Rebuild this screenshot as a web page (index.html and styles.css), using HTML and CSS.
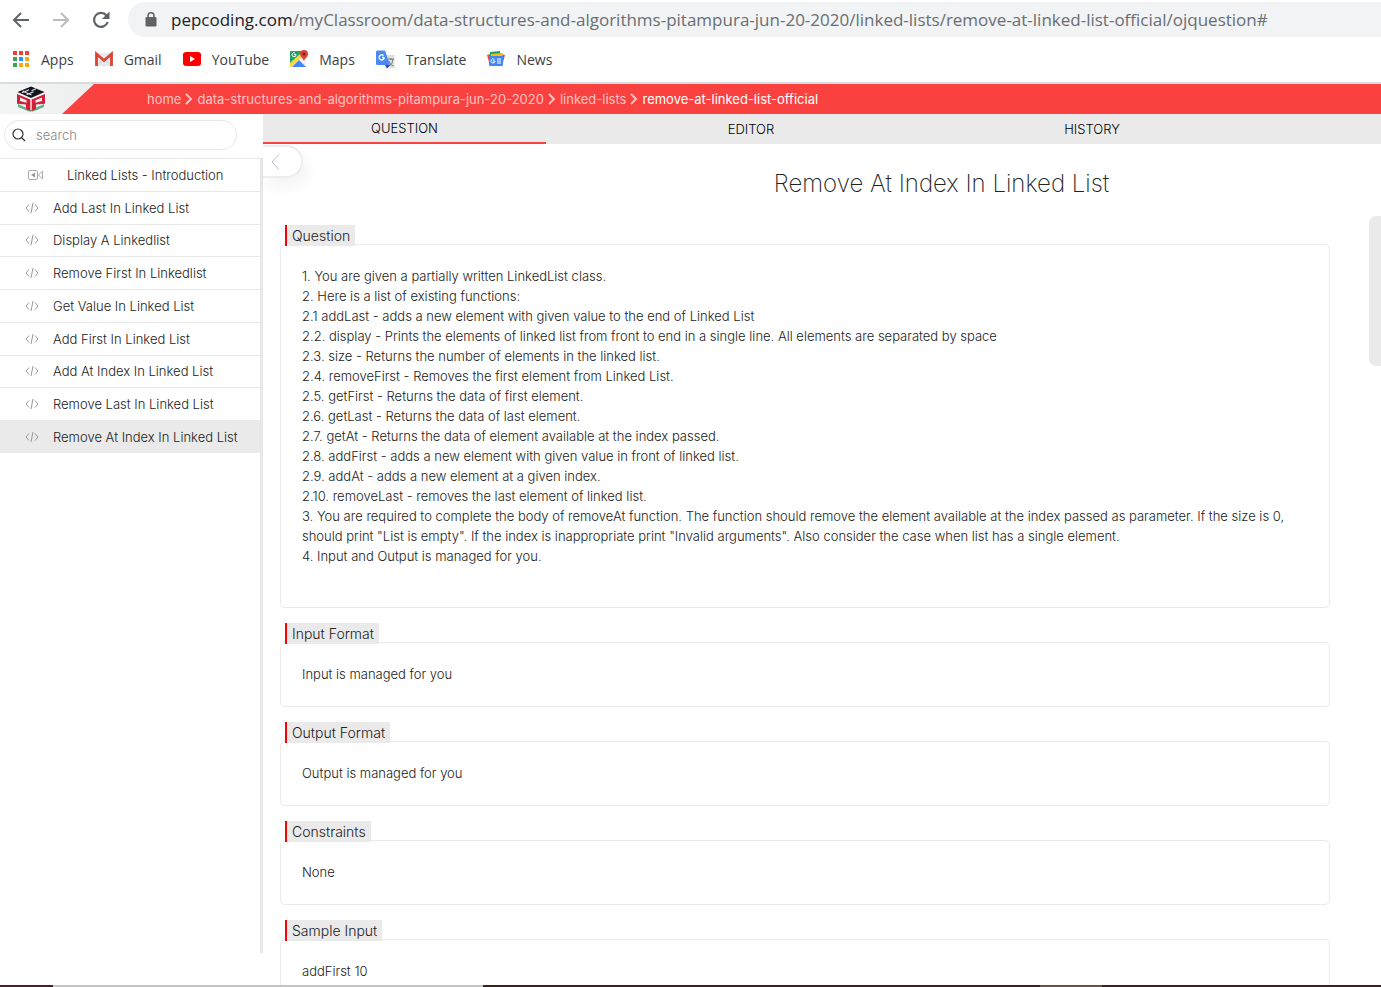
FILE: index.html
```html
<!DOCTYPE html>
<html lang="en">
<head>
<meta charset="utf-8">
<title>Remove At Index In Linked List</title>
<link rel="stylesheet" href="styles.css">
</head>
<body>
<div class="window">
  <div class="toolbar">
    <button class="nav" aria-label="Back"><svg viewBox="0 0 18 18" width="18" height="18" fill="none" stroke="#5f6368" stroke-width="2"><path d="M17 9H2M9 2L2 9l7 7"/></svg></button>
    <button class="nav" aria-label="Forward"><svg viewBox="0 0 18 18" width="18" height="18" fill="none" stroke="#babcbe" stroke-width="2"><path d="M1 9h15M9 2l7 7-7 7"/></svg></button>
    <button class="nav" aria-label="Reload"><svg viewBox="0 0 18 18" width="18" height="18"><path d="M14.500 4.500A7 7 0 1 0 15.700 11" fill="none" stroke="#5f6368" stroke-width="2.200"/><path d="M17.500 0.500v7.500H10z" fill="#5f6368"/></svg></button>
    <div class="address">
      <svg viewBox="0 0 12 15" width="12" height="15"><rect x="0.500" y="5" width="11" height="9.500" rx="1.200" fill="#5f6368"/><path d="M3 6V3.800a3 3 0 0 1 6 0V6" fill="none" stroke="#5f6368" stroke-width="1.500"/></svg>
      <span class="url"><b>pepcoding.com</b>/myClassroom/data-structures-and-algorithms-pitampura-jun-20-2020/linked-lists/remove-at-linked-list-official/ojquestion#</span>
    </div>
  </div>
  <nav class="bookmarks">
    <a href="#"><svg viewBox="0 0 18 18" width="18" height="18"><path fill="#ea4335" d="M1 1h4v4H1zM7 1h4v4H7zM13 1h4v4h-4z"/><path fill="#34a853" d="M1 7h4v4H1z"/><path fill="#2196f3" d="M7 7h4v4H7z"/><path fill="#fba90a" d="M13 7h4v4h-4zM7 13h4v4H7zM13 13h4v4h-4z"/><path fill="#34a853" d="M1 13h4v4H1z"/></svg>Apps</a>
    <a href="#"><svg viewBox="0 0 18 18" width="18" height="18"><path d="M0 3h18v13H0z" fill="#e9e9e9"/><path d="M1 16l8-7 8 7" fill="none" stroke="#cfcfcf"/><path d="M1.500 16V4L9 10.500 16.500 4V16" fill="none" stroke="#db4437" stroke-width="2.800"/></svg>Gmail</a>
    <a href="#"><svg viewBox="0 0 18 18" width="18" height="18"><rect y="2" width="18" height="14" rx="3" fill="#f00"/><path d="M7 6l5 3-5 3z" fill="#fff"/></svg>YouTube</a>
    <a href="#"><svg viewBox="0 0 18 18" width="18" height="18"><rect y="1" width="16" height="16" rx="1" fill="#1fa463"/><path d="M0 15L12 4l4 4v9H0z" fill="#f1f1f1"/><path d="M2 17l7-7 7 7z" fill="#4285f4"/><path d="M0 13L11 3l2 3L1 17H0z" fill="#fdd835"/><path d="M6 4.500H4M6 4.500A2 2 0 1 1 5 3" fill="none" stroke="#fff"/><path d="M14 11c-1-3-4-4-4-7a4 4 0 0 1 8 0c0 3-3 4-4 7z" fill="#dc4437"/><circle cx="14" cy="4" r="1.500" fill="#7b241d"/></svg>Maps</a>
    <a href="#"><svg viewBox="0 0 19 19" width="19" height="19"><path d="M7 5h11.500v13H10z" fill="#e0e0e0"/><path d="M12 9h6M15 8v2M12.500 16c3-1 4-3 4.500-7M13 11c1 3 2 4 4.500 5" fill="none" stroke="#707b80"/><path d="M9 15h5l-3 3.500z" fill="#3949ab"/><path d="M1.500.500H9L14 15H1.500A1.500 1.500 0 0 1 0 13.500V2A1.500 1.500 0 0 1 1.500.500z" fill="#4b8af5"/><path d="M8.300 7.500H6M8.300 7.500A2.600 2.600 0 1 1 7.500 5.500" fill="none" stroke="#fff" stroke-width="1.300"/></svg>Translate</a>
    <a href="#"><svg viewBox="0 0 18 18" width="18" height="18"><path d="M0 5l4-1v8H2z" fill="#e8453c"/><path d="M18 5l-4-1v8h2z" fill="#e8453c"/><path d="M3 2l10-1 1 6H3z" fill="#20a464"/><path d="M4 4l12-1-1 6H4z" fill="#fbbc04"/><path d="M2 6h14v9a1 1 0 0 1-1 1H3a1 1 0 0 1-1-1z" fill="#4285f4"/><path d="M8 11H6M8 11a2 2 0 1 1-.6-1.500M10 9h4M10 11h4M10 13h4" fill="none" stroke="#fff"/></svg>News</a>
  </nav>
  <header class="header">
    <a class="logo" href="#" aria-label="Home"><svg viewBox="0 0 30 26" width="30" height="26"><path d="M2 18l13 6 13-6v3l-11 4.500h-4L2 21z" fill="#63ad88"/><path d="M15 0.500L28.500 6 15 12 1.500 6z" fill="#15151f"/><path d="M6 6.800l7-3M10.500 8.700l7-3M15.500 4.800l4.500-2M6.500 5l9 4" stroke="#dfe3e6" stroke-width="1.100" fill="none"/><path d="M1 8l13.300 5.500V25L10 23v-4.500L1 17.800z" fill="#d3203a"/><path d="M29 8l-13.300 5.500V25l4.300-2v-4.500l9-.7z" fill="#d3203a"/><path d="M4 11.500l6.500 2.700v2.600L4 15z" fill="#f3eff0"/><path d="M26 11.500l-6.500 2.700v2.600L26 15z" fill="#f3eff0"/></svg></a>
    <nav class="crumbs" aria-label="Breadcrumb">
      <a href="#">home</a><svg viewBox="0 0 8 12" width="8" height="12"><path d="M1 1l5 5-5 5"/></svg>
      <a href="#">data-structures-and-algorithms-pitampura-jun-20-2020</a><svg viewBox="0 0 8 12" width="8" height="12"><path d="M1 1l5 5-5 5"/></svg>
      <a href="#">linked-lists</a><svg viewBox="0 0 8 12" width="8" height="12"><path d="M1 1l5 5-5 5"/></svg>
      <a href="#" class="current">remove-at-linked-list-official</a>
    </nav>
  </header>
  <div class="body">
    <aside class="sidebar">
      <label class="search"><svg viewBox="0 0 14 14" width="14" height="14" fill="none" stroke="#333" stroke-width="1.200"><circle cx="6" cy="6" r="5"/><path d="M9.500 9.500L13 13"/></svg><input type="text" placeholder="search" aria-label="search"></label>
      <div class="list">
        <a class="video" href="#"><svg viewBox="0 0 16 12" width="16" height="12" fill="none" stroke="#aaa"><rect x="0.500" y="1.500" width="9" height="9" rx="1.500"/><path d="M10.500 6l4-4v8z"/><path d="M7 3.500v5L3 6z" fill="#999" stroke="none"/></svg>Linked Lists - Introduction</a>
        <a href="#"><svg class="code" viewBox="0 0 14 12" width="14" height="12"><path d="M4 2.500L1 6l3 3.500M10 2.500L13 6l-3 3.500M8 1L6 11"/></svg>Add Last In Linked List</a>
        <a href="#"><svg class="code" viewBox="0 0 14 12" width="14" height="12"><path d="M4 2.500L1 6l3 3.500M10 2.500L13 6l-3 3.500M8 1L6 11"/></svg>Display A Linkedlist</a>
        <a href="#"><svg class="code" viewBox="0 0 14 12" width="14" height="12"><path d="M4 2.500L1 6l3 3.500M10 2.500L13 6l-3 3.500M8 1L6 11"/></svg>Remove First In Linkedlist</a>
        <a href="#"><svg class="code" viewBox="0 0 14 12" width="14" height="12"><path d="M4 2.500L1 6l3 3.500M10 2.500L13 6l-3 3.500M8 1L6 11"/></svg>Get Value In Linked List</a>
        <a href="#"><svg class="code" viewBox="0 0 14 12" width="14" height="12"><path d="M4 2.500L1 6l3 3.500M10 2.500L13 6l-3 3.500M8 1L6 11"/></svg>Add First In Linked List</a>
        <a href="#"><svg class="code" viewBox="0 0 14 12" width="14" height="12"><path d="M4 2.500L1 6l3 3.500M10 2.500L13 6l-3 3.500M8 1L6 11"/></svg>Add At Index In Linked List</a>
        <a href="#"><svg class="code" viewBox="0 0 14 12" width="14" height="12"><path d="M4 2.500L1 6l3 3.500M10 2.500L13 6l-3 3.500M8 1L6 11"/></svg>Remove Last In Linked List</a>
        <a class="active" href="#"><svg class="code" viewBox="0 0 14 12" width="14" height="12"><path d="M4 2.500L1 6l3 3.500M10 2.500L13 6l-3 3.500M8 1L6 11"/></svg>Remove At Index In Linked List</a>
      </div>
    </aside>
    <main class="main">
      <nav class="tabs">
        <button class="selected">QUESTION</button>
        <button>EDITOR</button>
        <button>HISTORY</button>
      </nav>
      <button class="collapse" aria-label="Collapse sidebar"><svg viewBox="0 0 9 16" width="9" height="16" fill="none" stroke="#b9b9cc"><path d="M8 0.500L1 8l7 7.500"/></svg></button>
      <div class="scrollthumb"></div>
      <div class="content">
        <h1>Remove At Index In Linked List</h1>
        <section>
          <h2>Question</h2>
          <div class="card long">1. You are given a partially written LinkedList class.<br>2. Here is a list of existing functions:<br>2.1 addLast - adds a new element with given value to the end of Linked List<br>2.2. display - Prints the elements of linked list from front to end in a single line. All elements are separated by space<br>2.3. size - Returns the number of elements in the linked list.<br>2.4. removeFirst - Removes the first element from Linked List.<br>2.5. getFirst - Returns the data of first element.<br>2.6. getLast - Returns the data of last element.<br>2.7. getAt - Returns the data of element available at the index passed.<br>2.8. addFirst - adds a new element with given value in front of linked list.<br>2.9. addAt - adds a new element at a given index.<br>2.10. removeLast - removes the last element of linked list.<br>3. You are required to complete the body of removeAt function. The function should remove the element available at the index passed as parameter. If the size is 0, should print "List is empty". If the index is inappropriate print "Invalid arguments". Also consider the case when list has a single element.<br>4. Input and Output is managed for you.</div>
        </section>
        <section><h2>Input Format</h2><div class="card">Input is managed for you</div></section>
        <section><h2>Output Format</h2><div class="card">Output is managed for you</div></section>
        <section><h2>Constraints</h2><div class="card">None</div></section>
        <section><h2>Sample Input</h2><div class="card">addFirst 10</div></section>
      </div>
    </main>
  </div>
  <footer class="edge"></footer>
</div>
</body>
</html>
```
FILE: styles.css
```css
* { box-sizing: border-box; }
body { margin: 0; background: #fff; color: #222; font-family: Inter, sans-serif; font-size: 13px; font-weight: 300; }
button { border: 0; background: none; padding: 0; font: inherit; color: inherit; }
a { color: inherit; text-decoration: none; }
svg { flex: none; display: block; }
.window { height: 100vh; display: flex; flex-direction: column; overflow: hidden; }

.toolbar { display: flex; align-items: center; height: 39px; padding-left: 12px; gap: 22px; flex: none; }
.nav { width: 18px; height: 18px; }
.address { flex: 1; min-width: 0; height: 35px; margin-left: -4px; padding-left: 17px; display: flex; align-items: center; gap: 14px; background: #f1f3f4; border-radius: 18px 0 0 18px; }
.url { font-family: "Open Sans", sans-serif; font-size: 17px; font-weight: 400; color: #6a6e72; white-space: nowrap; }
.url b { font-weight: 400; color: #202124; }
.bookmarks { display: flex; align-items: center; height: 45px; padding: 0 12px 3px; gap: 21px; border-bottom: 2px solid #d9dadd; flex: none; font-family: "Open Sans", sans-serif; font-size: 14px; font-weight: 400; color: #3c4043; }
.bookmarks a { display: flex; align-items: center; gap: 11px; }

.header { display: flex; height: 30px; flex: none; background: #f9423f; }
.logo { width: 94px; padding: 2px 0 0 16px; background: linear-gradient(90deg, #f3f5f4, #ecefed); clip-path: polygon(0 0, 100% 0, 62px 100%, 0 100%); }
.crumbs { display: flex; align-items: center; gap: 4px; padding-left: 53px; color: #fdc4c2; font-size: 13px; font-weight: 400; }
.crumbs .current { color: #fff; }
.crumbs svg { fill: none; stroke: #fdc4c2; stroke-width: 2; }

.body { flex: 1; min-height: 0; display: flex; }
.sidebar { width: 263px; flex: none; display: flex; flex-direction: column; padding-bottom: 32px; }
.search { display: flex; align-items: center; gap: 10px; width: 233px; height: 30px; margin: 6px 0 8px 4px; padding: 0 7px; border: 1px solid #e8e8e8; border-radius: 15px; flex: none; }
.search input { border: 0; outline: 0; padding: 0; min-width: 0; flex: 1; background: none; font: inherit; }
.search input::placeholder { color: #888; opacity: 1; }
.list { flex: 1; border-right: 3px solid #e8e8e8; display: grid; grid-auto-rows: 4.12%; align-content: start; }
.list a { display: flex; align-items: center; gap: 14px; padding-left: 25px; border-top: 1px solid #e8e8e8; }
.list .video { padding-left: 28px; gap: 23px; }
.list .active { background: #eaeaea; }
.code { fill: none; stroke: #999; }

.main { flex: 1; min-width: 0; position: relative; display: flex; flex-direction: column; }
.tabs { display: grid; grid-template-columns: 283fr 410fr 272fr 153fr; height: 30px; flex: none; background: #eaeaea; color: #000; }
.tabs .selected { border-bottom: 2px solid #f9423f; }
.collapse { position: absolute; left: 0; top: 31px; width: 40px; height: 33px; padding-left: 8px; background: #fff; border: 2px solid #ededed; border-left: 0; border-radius: 0 17px 17px 0; box-shadow: 4px 8px 16px #0000000d; }
.scrollthumb { position: absolute; right: 0; top: 102px; width: 12px; height: 150px; background: #eaeaea; border-radius: 7px 0 0 7px; }
.content { flex: 1; min-height: 0; overflow: hidden; padding: 24px 51px 0 17px; }
h1 { margin: 0 0 25px; padding-left: 26%; text-align: center; font-size: 24px; line-height: 32px; font-weight: 200; }
section { margin-bottom: 15px; }
h2 { position: relative; width: max-content; margin: 0 0 -2px 5px; padding: 0 5px; border-left: 2px solid #f00; background: #eaeaea; font-size: 14px; line-height: 21px; font-weight: 300; }
.card { border: 1px solid #eaeaea; border-radius: 5px; padding: 21px 21px 22px; line-height: 20px; }
.card.long { padding-bottom: 41px; }
.edge { height: 2px; flex: none; background: linear-gradient(90deg, #4a202c 0 53px, #c4c4c4 53px 483px, #402020 483px 1040px, #6b5148 1040px 1102px, #402020 1102px); }
```
